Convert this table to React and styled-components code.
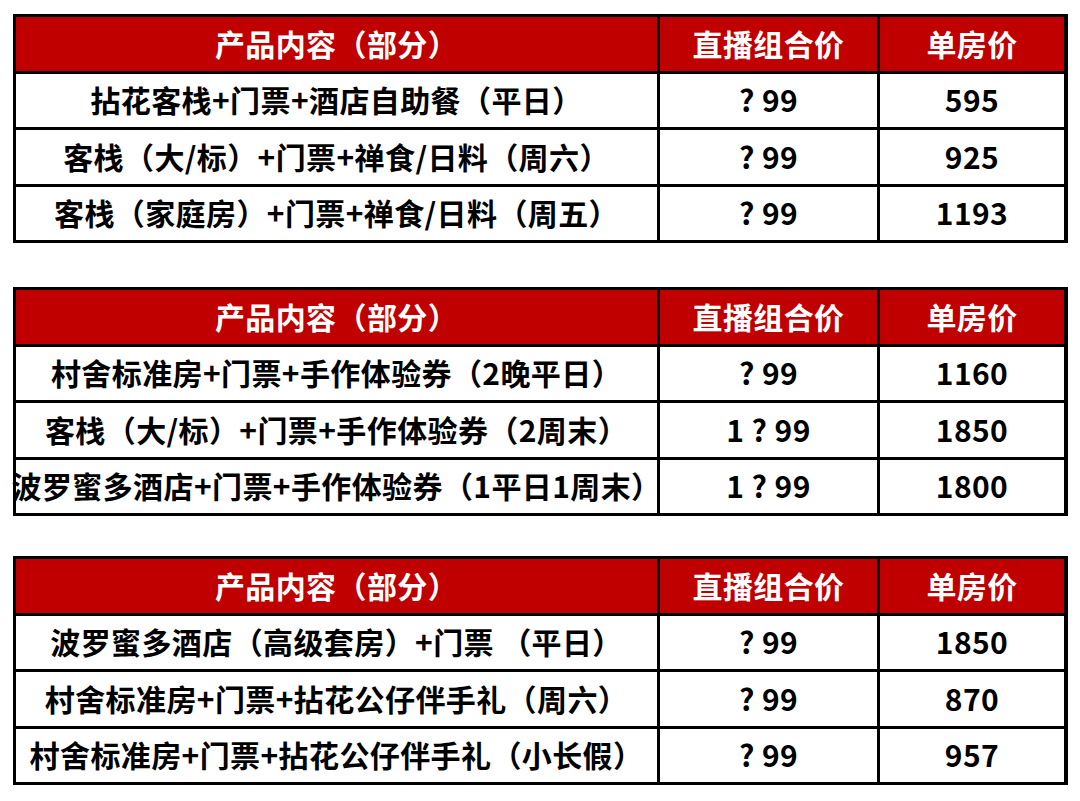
import React from 'react';
import styled, { createGlobalStyle } from 'styled-components';

const GlobalStyle = createGlobalStyle`
  html, body {
    margin: 0;
    padding: 0;
    background: #fff;
  }
  body {
    font-family: "Microsoft YaHei", "Noto Sans CJK SC", "Noto Sans", sans-serif;
  }
`;

const Page = styled.main`
  display: flex;
  flex-direction: column;
  padding: 14px 0 0 13px;
  width: 1080px;
  box-sizing: border-box;
`;

const Table = styled.section`
  display: grid;
  grid-template-columns: 641px 217px 184px;
  grid-template-rows: 54px 53px 54px 53px;
  gap: 3px;
  padding: 3px;
  width: 1055px;
  box-sizing: border-box;
  background: #000;
  margin-bottom: ${p => p.$space}px;
`;

const Cell = styled.div`
  display: flex;
  align-items: center;
  justify-content: center;
  background: ${p => (p.$head ? '#c00000' : '#fff')};
  color: ${p => (p.$head ? '#fff' : '#000')};
  font-size: 30px;
  font-weight: 700;
  line-height: 1;
  white-space: nowrap;
  text-spacing-trim: space-all;
  letter-spacing: 0.4px;
  padding-bottom: 3px;
`;

const tables = [
  {
    space: 44,
    rows: [
      ['拈花客栈+门票+酒店自助餐（平日）', '? 99', '595'],
      ['客栈（大/标）+门票+禅食/日料（周六）', '? 99', '925'],
      ['客栈（家庭房）+门票+禅食/日料（周五）', '? 99', '1193'],
    ],
  },
  {
    space: 40,
    rows: [
      ['村舍标准房+门票+手作体验券（2晚平日）', '? 99', '1160'],
      ['客栈（大/标）+门票+手作体验券（2周末）', '1 ? 99', '1850'],
      ['波罗蜜多酒店+门票+手作体验券（1平日1周末）', '1 ? 99', '1800'],
    ],
  },
  {
    space: 0,
    rows: [
      ['波罗蜜多酒店（高级套房）+门票 （平日）', '? 99', '1850'],
      ['村舍标准房+门票+拈花公仔伴手礼（周六）', '? 99', '870'],
      ['村舍标准房+门票+拈花公仔伴手礼（小长假）', '? 99', '957'],
    ],
  },
];

export default function App() {
  return (
    <>
      <GlobalStyle />
      <Page>
        {tables.map((t, i) => (
          <Table key={i} $space={t.space}>
            <Cell $head>产品内容（部分）</Cell>
            <Cell $head>直播组合价</Cell>
            <Cell $head>单房价</Cell>
            {t.rows.map((r, j) => (
              <React.Fragment key={j}>
                <Cell>{r[0]}</Cell>
                <Cell>{r[1]}</Cell>
                <Cell>{r[2]}</Cell>
              </React.Fragment>
            ))}
          </Table>
        ))}
      </Page>
    </>
  );
}
